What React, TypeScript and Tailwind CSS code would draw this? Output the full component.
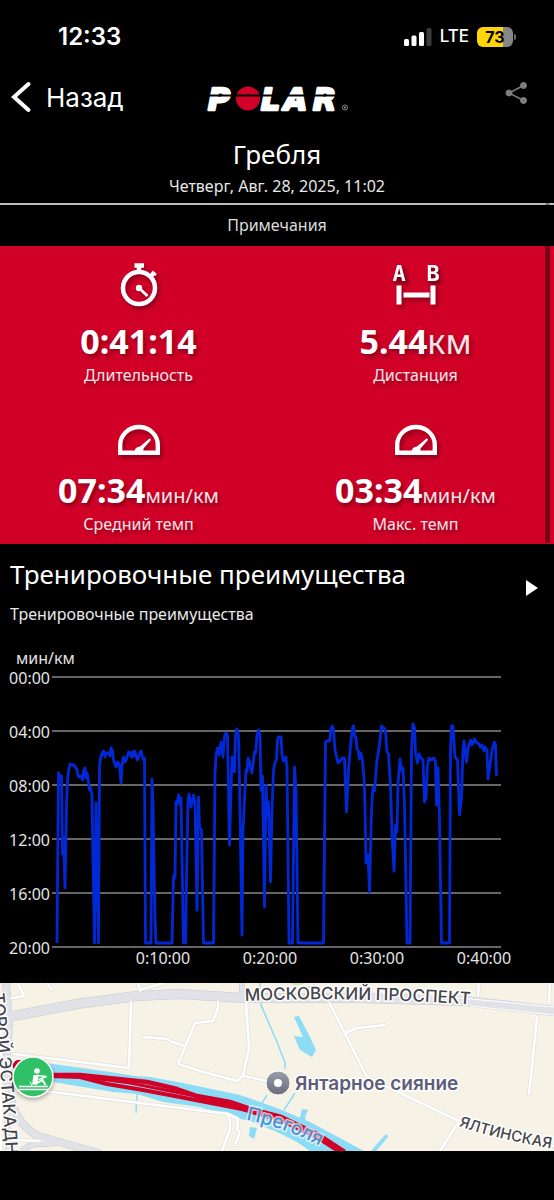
import type { ReactNode } from 'react'

const stats = [
  { icon: <StopwatchIcon />, value: '0:41:14', unit: '', small: false, label: 'Длительность' },
  { icon: <DistanceIcon />, value: '5.44', unit: 'км', small: false, label: 'Дистанция' },
  { icon: <GaugeIcon />, value: '07:34', unit: 'мин/км', small: true, label: 'Средний темп' },
  { icon: <GaugeIcon />, value: '03:34', unit: 'мин/км', small: true, label: 'Макс. темп' },
]

const yTicks = ['00:00', '04:00', '08:00', '12:00', '16:00', '20:00']
const xTicks = ['0:10:00', '0:20:00', '0:30:00', '0:40:00']

// pace curve in chart coordinates
const pace =
  '57,303 58.5,133 60,139 61.5,136 62.5,214 63.5,197 65,248 66.5,165 67.5,140 69,128 70,124 72,125 74,125 76,128 77,130 78.5,137 81,136 82.5,140 83.5,131 85,128 86,138 87,133 88,138 89.5,150 90.5,147 92,155 93,220 94.5,303 96,163 97,225 98.5,303 99.5,125 101,116 103.5,111 105,117 106.5,113 109,113 110,116 111,108 112.5,111 113.5,120 116,127 117.5,122 119.5,125 121,143 122,125 123.5,117 125,122 126.5,119 128.5,112 130,113 131.5,117 132,112 133.5,116 134.5,111 136,116 137.5,120 139,115 141,111 143,119 144.5,118 145.5,303 151,303 152,139 153,165 155,280 156,303 172,303 173.5,236 175,238 176,162 177,164 178.5,155 180,164 181,158 183.5,303 185.5,303 186.5,240 188,160 189,154 191,167 193.5,155 195,163 197,270 198.5,157 199.5,188 201.5,190 203.5,303 213.5,303 215,135 216,115 217.5,108 219,115 221,102 223,117 224.5,96 226,93 227.5,95 229.5,205 232,117 234.5,132 235.5,95 237,89 238.5,95 240,170 242,295 243,190 246,130 247,132 248,118 249.5,122 252,133 254.5,112 255.5,113 257,95 258.5,90 260,95 261,150 262.5,136 264.5,267 266,145 267.5,176 268.5,162 270.5,242 272,170 273.5,130 275,123 276.5,120 277.5,100 278.5,97 281,97 282,115 283.5,121 286,117 287,128 289,303 292.5,303 294.5,127 296,150 298,303 323.5,303 325.5,102 327,101 329.5,101 331,90 332,86 333.5,89 335,110 338,123 340,121 342.5,118 344.5,118 346.5,172 348.5,130 350.5,106 352.5,88 353.5,86 354.5,95 356,98 357,109 358.5,111 359.5,119 361,113 362.5,121 364.5,145 366,223 368,215 369.5,252 371.5,170 373,147 374.5,151 377,120 379.5,105 381.5,86 384,88 385.5,91 387,112 388.5,114 390.5,145 392,195 394,231 395.5,185 397,192 398,145 400,119 401.5,130 403,128 404.5,165 407,303 410,303 411.5,110 413,84 414.5,88 415.5,113 417.5,123 419,114 421,118 423,120 424.5,162 426,158 427.5,125 429,118 431,120 434,118 435.5,122 436.5,165 438,128 439.5,180 441.5,303 449.5,303 450.5,110 451.5,86 453,86 455,117 457.5,120 459.5,175 461.5,158 463,110 464,101 466.5,122 468,108 470.5,100 472,105 474.5,99 476,102 479,104 480.5,107 482,105 484,111 485,107 487,110 488,139 490,125 492,110 494.5,102 495.5,105 496.5,136'

const roads = [
  'M14 71 L129 85 L131 19',
  'M0 107 L53 109 L228 131 L238 136 L237 147 L240 149 L235 162',
  'M227 131 L230 138 L230 146 L222 168',
  'M143 54 L168 56 L172 59 L185 63',
  'M218 19 L218 25 L213 38 L195 40 L178 81 L200 88 L237 98 L243 93 L267 98',
  'M246 20 L249 65 L243 93',
  'M18 0 L24 13 L7 16',
  'M47 0 L52 7',
  'M138 0 L141 10 M142 6 L164 0',
  'M329 19 L367 94 L459 138 L554 163',
  'M345 50 L357 45 L385 42',
  'M459 138 L440 168',
  'M537 34 L529 111',
  'M479 0 L478 13',
  'M550 0 L549 20',
  'M1 40 L1 168',
  'M14 157 L45 158',
]

const highways = [
  { d: 'M3 35 L77 21 L137 13 L180 11 L243 15 L360 15 L464 18 L554 28', w: 9 },
  { d: 'M6 0 L9 40 L7 70 L10 110 Q14 140 38 153 L98 170', w: 7 },
  { d: 'M6 60 L8 168', w: 5 },
  { d: 'M20 170 Q28 161 40 161 L60 160', w: 5 },
  { d: 'M242 0 L242 13', w: 5 },
]

function StopwatchIcon() {
  return (
    <svg viewBox="0 0 40 46" className="h-[46px] w-10" fill="none" stroke="#fff" aria-hidden="true">
      <circle cx="20" cy="27" r="16" strokeWidth="4.5" />
      <path d="M15.500 4.500 H25 M20 4 V11" strokeWidth="4.500" />
      <path d="M32 15 L35 12" strokeWidth="4" />
      <path d="M33 10.500 L37 14" strokeWidth="2.500" />
      <circle cx="20" cy="27" r="3.200" fill="#fff" stroke="none" />
      <path d="M20 27 L28.500 35" strokeWidth="3" />
    </svg>
  )
}

function DistanceIcon() {
  return (
    <svg viewBox="0 0 48 46" className="h-[46px] w-12" fill="#fff" aria-hidden="true">
      <g textAnchor="middle" className="font-['DejaVu_Sans_Mono'] text-[22px] font-bold">
        <text x="7" y="20">A</text>
        <text x="41" y="20">B</text>
      </g>
      <path d="M4.500 24.500 h5 v19 h-5z M38.500 24.500 h5 v19 h-5z M11.500 31.500 h26 v5 h-26z" />
    </svg>
  )
}

function GaugeIcon() {
  return (
    <svg viewBox="0 0 42 46" className="h-[46px] w-[42px]" aria-hidden="true">
      <path d="M2.200 42.700 V35 A18.800 18 0 0 1 39.800 35 V42.700 Z" fill="none" stroke="#fff" strokeWidth="4.400" />
      <path d="M16.500 42 Q16.500 37 22 36.500 L31.500 28.500 Q33.500 28.500 32.500 30.500 L25.500 38.500 Q25.500 41 25 42 Z" fill="#fff" />
    </svg>
  )
}

function PolarLogo() {
  return (
    <svg viewBox="0 0 142 26" className="mt-1 h-[26px] w-[142px] overflow-visible" role="img" aria-label="Polar">
      <g
        fill="#fff"
        stroke="#fff"
        strokeWidth="2.6"
        strokeLinejoin="round"
        className="font-['DejaVu_Sans'] text-[30px] font-bold italic"
      >
        <text x="2" y="24">P</text>
        <text x="55" y="24">L</text>
        <text x="78" y="24">A</text>
        <text x="107" y="24">R</text>
      </g>
      <circle cx="42" cy="12.500" r="12" fill="#d10027" />
      <path d="M0 9.500 H136" stroke="#000" strokeWidth="2" />
      <circle cx="139" cy="21.500" r="2.500" fill="none" stroke="#888" />
      <circle cx="139" cy="21.500" r="1" fill="#999" />
    </svg>
  )
}

function StatusBar() {
  return (
    <div className="flex h-[74px] items-center justify-between pr-[38px] pl-[58px] font-['Inter',sans-serif]">
      <span className="text-2xl font-semibold">12:33</span>
      <div className="flex items-center gap-2">
        <svg viewBox="0 0 28 18" className="h-[18px] w-7" fill="#fff" aria-hidden="true">
          <rect x="0" y="11" width="5" height="7" rx="1.500" />
          <rect x="7.500" y="7.500" width="5" height="10.500" rx="1.500" />
          <rect x="15" y="4" width="5" height="14" rx="1.500" />
          <rect x="22.500" y="0" width="5" height="18" rx="1.500" fill="#3a3a3a" />
        </svg>
        <span className="text-[17px] font-medium">LTE</span>
        <div className="flex items-center gap-px">
          <div className="flex h-5 w-9 items-center justify-center rounded-md bg-linear-to-r from-[#fed608] from-73% to-[#868686] to-73% text-base font-bold text-black">
            73
          </div>
          <div className="h-[6px] w-[2px] rounded-r-full bg-[#6b6b6b]" />
        </div>
      </div>
    </div>
  )
}

function NavBar() {
  return (
    <nav className="grid h-[46px] grid-cols-[1fr_auto_1fr] items-center px-2 font-['Inter',sans-serif]">
      <button type="button" className="flex items-center gap-3 justify-self-start text-[26px]">
        <svg viewBox="0 0 26 34" className="h-[34px] w-[26px]" fill="none" stroke="#fff" strokeWidth="4" strokeLinecap="round" aria-hidden="true">
          <path d="M20.500 4 L6 17 L20.500 30" />
        </svg>
        Назад
      </button>
      <PolarLogo />
      <button type="button" aria-label="Поделиться" className="justify-self-end pr-4 pb-2">
        <svg viewBox="0 0 26 24" className="h-6 w-[26px]" fill="#7d7d7d" stroke="#7d7d7d" aria-hidden="true">
          <path d="M19.500 4.500 L5 12 L19.500 19.500" fill="none" strokeWidth="1.500" />
          <circle cx="19.500" cy="4.500" r="3" />
          <circle cx="5" cy="12" r="3" />
          <circle cx="19.500" cy="19.500" r="3" />
        </svg>
      </button>
    </nav>
  )
}

type StatProps = { icon: ReactNode; value: string; unit: string; small: boolean; label: string }

function Stat({ icon, value, unit, small, label }: StatProps) {
  return (
    <div className="flex h-[149px] flex-col items-center pt-[15px] [text-shadow:2px_3px_4px_rgba(0,0,0,0.35)]">
      <div className="drop-shadow-[2px_3px_2px_rgba(0,0,0,0.35)]">{icon}</div>
      <div className="mt-2 text-[34px] leading-[52px]">
        <span className="font-bold">{value}</span>
        <span className={small ? 'text-xl text-white/90' : 'text-white/90'}>{unit}</span>
      </div>
      <div className="text-base leading-4 text-white/90">{label}</div>
    </div>
  )
}

function PaceChart() {
  return (
    <svg viewBox="0 0 554 343" className="block w-full" role="img" aria-label="мин/км">
      <g fill="#e4e4e4" className="font-['Noto_Sans'] text-base">
        <text x="16" y="24">мин/км</text>
        {yTicks.map((tick, i) => (
          <text key={tick} x="50" y={44 + i * 54} textAnchor="end">{tick}</text>
        ))}
        {xTicks.map((tick, i) => (
          <text key={tick} x={163 + i * 107} y="324" textAnchor="middle">{tick}</text>
        ))}
      </g>
      {yTicks.map((tick, i) => (
        <path key={tick} d={`M52 ${37 + i * 54} H501`} stroke="#666" strokeWidth="2" />
      ))}
      <polyline points={pace} fill="none" stroke="#0028d6" strokeWidth="2.8" strokeLinejoin="round" />
    </svg>
  )
}

function RouteMap() {
  return (
    <svg viewBox="0 0 554 168" className="block w-full bg-[#f6f2e6]" role="img" aria-label="Карта маршрута">
      <defs>
        <path id="avenue" d="M245 18 Q360 13 490 23" />
        <path id="overpass" d="M-8 10 Q-5 50 0 84 L6 168 L8 260" />
        <path id="river" d="M246 137 Q285 144 330 168" />
        <path id="yalta" d="M459 143 Q500 158 580 170" />
        <linearGradient id="pin" x1="0" y1="0" x2="0" y2="1">
          <stop offset="0" stopColor="#9a9daa" />
          <stop offset="1" stopColor="#6a6c7c" />
        </linearGradient>
      </defs>

      <path d="M290 0 Q297 5 304 0 Z" fill="#c9eba7" />

      {/* water */}
      <path
        d="M5 76 L53 81 L110 89 L135 93 L150 94 L183 100 L240 112 L277 125 L310 139 L364 168 L310 168 L297 159 L277 149 L253 139 L233 134 L200 124 L163 119 L137 111 L113 109 L53 99 L5 92 Z"
        fill="#8cdcf6"
      />
      <path
        d="M294 34 L299 33 L310 54 L316 67 L312 74 L300 67 L294 53 L303 54 Z M302 126 L308 127 L305 134 L307 140 L299 138 Z M250 144 L257 145 L254 156 L249 153 Z M384 153 L387 151 L388 154 L376 168 L371 168 Z"
        fill="#8cdcf6"
      />
      <path
        d="M260 0 L261 22 L277 59 L285 80 L285 86 M295 110 L284 127 M267 112 L262 120 M137 111 L136 130 M307 5 L315 2"
        fill="none"
        stroke="#8cdcf6"
        strokeWidth="1.5"
      />

      {/* roads */}
      <g fill="none" strokeLinejoin="round" strokeLinecap="round">
        {roads.map((d) => (
          <path key={d} d={d} stroke="#e2e0dc" strokeWidth="4" />
        ))}
        {highways.map(({ d, w }) => (
          <path key={d} d={d} stroke="#c9cacd" strokeWidth={w + 1} />
        ))}
        {roads.map((d) => (
          <path key={d} d={d} stroke="#fff" strokeWidth="2.6" />
        ))}
        {highways.map(({ d, w }) => (
          <path key={d} d={d} stroke="#e1e2e7" strokeWidth={w} />
        ))}
        <path d="M470 23 L554 32 M420 11 L554 24" stroke="#fff" strokeWidth="1" />
      </g>

      {/* track */}
      <g fill="none" stroke="#d10027" strokeLinejoin="round">
        <path d="M50 92 L80 92 L147 99 L177 106 L197 113 L230 119 L247 125" strokeWidth="4.5" />
        <path d="M50 93 L80 94 L107 101 L143 107 L180 114 L247 127" strokeWidth="4" />
        <path d="M78 93 L130 100 L195 113 L235 122" strokeWidth="3" />
        <path d="M195 115 L232 121 L250 127 L280 135 L318 153 L344 170" strokeWidth="7" />
      </g>

      <g className="font-['Inter']" strokeLinejoin="round" paintOrder="stroke">
        <text className="text-[17px] font-medium" fill="#45454a" stroke="#fff" strokeWidth="3">
          <textPath href="#avenue">МОСКОВСКИЙ ПРОСПЕКТ</textPath>
        </text>
        <text className="text-[17px] font-medium" fill="#45454a" stroke="#fff" strokeWidth="3">
          <textPath href="#overpass">ТОРОЙ ЭСТАКАДН</textPath>
        </text>
        <text className="text-[19px] font-medium" fill="#4c8fd0" stroke="#fff" strokeOpacity="0.7" strokeWidth="3">
          <textPath href="#river">Преголя</textPath>
        </text>
        <text className="text-[15px] font-medium" fill="#45454a" stroke="#fff" strokeWidth="3">
          <textPath href="#yalta">ЯЛТИНСКАЯ</textPath>
        </text>
        <text x="295" y="107" className="text-[19px] font-semibold" fill="#5c5d78" stroke="#fff" strokeWidth="3">
          Янтарное сияние
        </text>
      </g>

      <circle cx="278" cy="100" r="12" fill="url(#pin)" stroke="#fff" strokeWidth="1" />
      <circle cx="278" cy="100" r="4" fill="#fff" />

      {/* start point */}
      <circle cx="19" cy="83" r="7" fill="#d10027" stroke="#fff" strokeWidth="1.5" />
      <g className="drop-shadow-[0_2px_2px_rgba(0,0,0,0.3)]">
        <circle cx="33" cy="94" r="20" fill="#30c066" stroke="#fff" strokeWidth="1.5" />
      </g>
      <g fill="none" stroke="#fff">
        <circle cx="37" cy="88" r="2.800" fill="#fff" stroke="none" />
        <path d="M33.500 92 H38 L38.500 96 L36.500 101.500 H32 Z" fill="#fff" stroke="none" />
        <path d="M37 92.500 L46.500 93.500 L39 96.500" strokeWidth="1.500" />
        <path d="M35 101 L42.500 97 L45.500 102" strokeWidth="2" />
        <path d="M19 103.500 H48 M19 106.500 H48" strokeWidth="1.500" />
        <path d="M30 98.500 L32 103" strokeWidth="1" />
      </g>
    </svg>
  )
}

export default function App() {
  return (
    <div className="min-h-screen bg-black font-['Noto_Sans',sans-serif] text-white">
      <StatusBar />
      <NavBar />

      <main className="relative">
        <header className="border-b-2 border-[#bdbdbd] pt-[14px] pb-[5px] text-center">
          <h1 className="text-[26px] leading-10">Гребля</h1>
          <p className="text-base leading-6 text-[#e8e8e8]">Четверг, Авг. 28, 2025, 11:02</p>
        </header>
        <p className="h-[41px] text-center text-base leading-10 text-[#dcdcdc]">Примечания</p>

        <section className="grid grid-cols-2 bg-[#d10027]">
          {stats.map((stat) => (
            <Stat key={stat.label} {...stat} />
          ))}
        </section>

        <a href="#benefits" className="flex h-24 items-center justify-between pr-4 pl-[10px]">
          <div className="pt-1">
            <h2 className="text-[26px] leading-10">Тренировочные преимущества</h2>
            <p className="text-base leading-10 text-[#e8e8e8]">Тренировочные преимущества</p>
          </div>
          <svg viewBox="0 0 12 16" className="mb-2 h-4 w-3" fill="#fff" aria-hidden="true">
            <path d="M0 0 L12 8 L0 16 Z" />
          </svg>
        </a>

        <PaceChart />
        <RouteMap />

        {/* scroll bar thumb */}
        <div className="absolute top-[83px] right-1 h-[340px] w-[5px] rounded-full bg-black/40" />
      </main>
    </div>
  )
}
